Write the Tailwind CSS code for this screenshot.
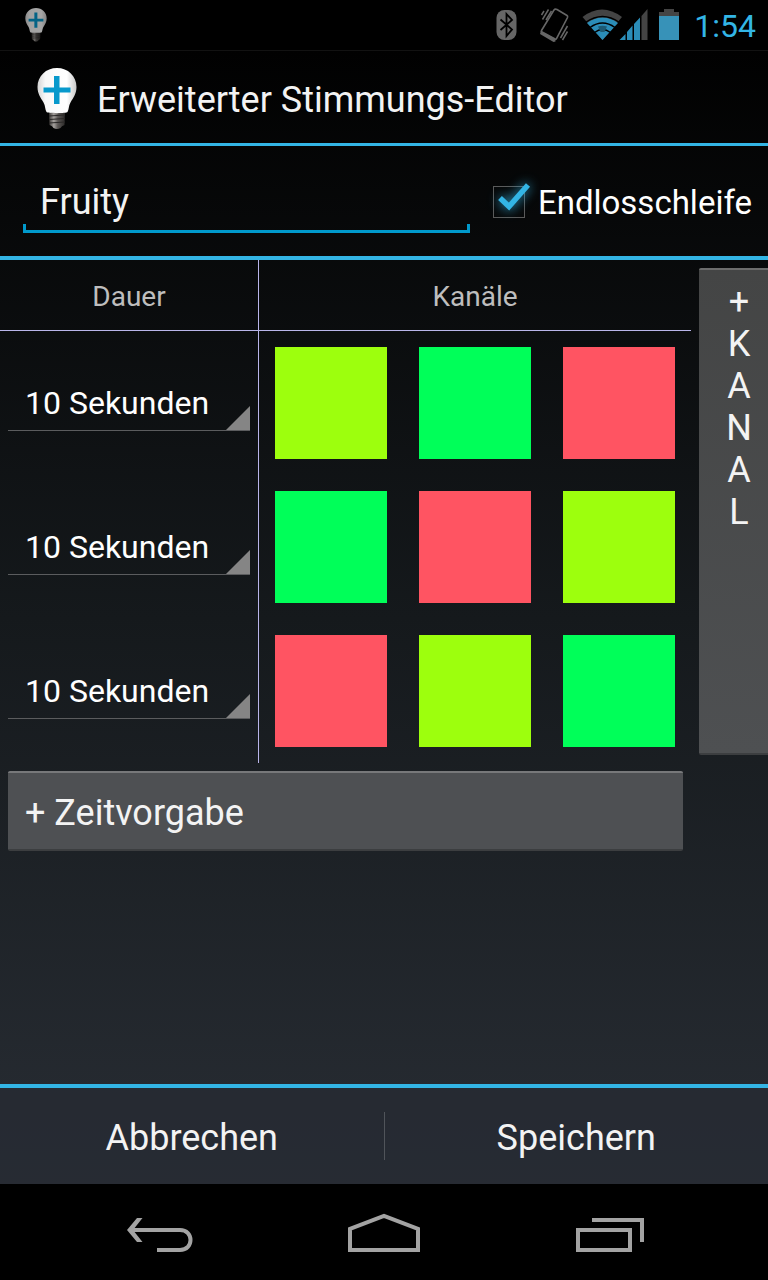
<!DOCTYPE html>
<html lang="de">
<head>
<meta charset="utf-8">
<meta name="viewport" content="width=device-width, initial-scale=1">
<title>Erweiterter Stimmungs-Editor</title>
<script src="https://cdn.jsdelivr.net/npm/@tailwindcss/browser@4"></script>
</head>
<body class="min-h-screen flex flex-col bg-black text-white font-['Roboto',sans-serif]">

<svg class="absolute size-0" aria-hidden="true">
  <defs>
    <linearGradient id="glass" x1="0" x2="1" y1="0" y2="0">
      <stop offset="0" stop-color="#d4d4d4"/><stop offset=".2" stop-color="#f8f8f8"/><stop offset=".75" stop-color="#ffffff"/><stop offset="1" stop-color="#c8c8c8"/>
    </linearGradient>
    <linearGradient id="socket" x1="0" x2="1" y1="0" y2="0">
      <stop offset="0" stop-color="#3a3735"/><stop offset=".3" stop-color="#a5a19e"/><stop offset=".55" stop-color="#5b5755"/><stop offset="1" stop-color="#2c2a29"/>
    </linearGradient>
    <symbol id="bulb" viewBox="0 0 40 62">
      <path fill="url(#socket)" d="M12 44h16l-.5 13q-3 1-4 3-3.500 2-7 0-1-2-4-3z"/>
      <path stroke="#2a2827" stroke-width="1" fill="none" d="M12 48l16-1M12 51.500l16-1M12 55l16-1"/>
      <path fill="url(#glass)" d="M20 0C9 0 .5 8 .5 19c0 7 3.500 11 6 15.500 2 3.500 1.500 7 3 9.500 1 1.500 20 1.500 21 0 1.500-2.500 1-6 3-9.500 2.500-4.500 6-8.500 6-15.500C39.500 8 31 0 20 0z"/>
      <path fill="#0799cc" d="M17 8h5.500v11.500h11v5h-11v11.500H17v-11.500H6.500v-5H17z"/>
    </symbol>
  </defs>
</svg>

<div class="h-[51px] shrink-0 flex items-center border-b border-[#121212] pl-[25px] pr-3">
  <svg class="w-[22px] h-[34px] opacity-65" aria-hidden="true"><use href="#bulb"/></svg>
  <div class="ml-auto flex items-center">
    <svg class="w-[163px] h-[50px] overflow-visible" viewBox="0 0 163 50" role="img" aria-label="Bluetooth, Vibration, WLAN, Mobilfunk">
      <rect x=".5" y="10" width="20" height="30" rx="8" fill="#666"/>
      <path d="M4.500 19.500l11.500 10-5.500 6.500V14l5.500 6-11.500 10" fill="none" stroke="#000" stroke-width="1.800"/>
      <path d="M61 9.500l10 6q1 .7.500 2L60.500 38.500q-.8 1.300-2 .7L46 32.500q-1.200-.7-.5-2L58 10q1-1.500 3-.5z" fill="none" stroke="#666" stroke-width="1.600"/>
      <path d="M45 30.500l14 7.500 .5 3.500-2 .5L44 34z" fill="#666"/>
      <path d="M48 11l-2.500 4M52.500 9.500l-6 10M55.500 11l-5.500 9M71.500 26l-7 12M71.500 31.500l-5 8.500" stroke="#666" stroke-width="1.500" fill="none"/>
      <path fill="#444" d="M86.500 17Q106 2 126 17L106.500 40z"/>
      <path fill="#2b8db8" d="M91 23Q106.500 12 122 23L106.500 40z"/>
      <path fill="none" stroke="#000" stroke-width="1.500" d="M89.500 22.500Q106.500 10.500 123.500 22.500M94 27.500Q106.500 18.500 119 27.500M98.500 32.500Q106.500 26.500 114.500 32.500"/>
      <path fill="#1d5a73" d="M102 26.500q4.500-1.500 9 0l-2.500 5.500h-4z"/>
      <path fill="#2b8db8" d="M123.500 40l6-6v6zM131 40v-8l5.500-6.500V40zM138 40V24l6-6.500V40z"/>
      <path fill="#444" d="M145.500 40V16l6-7v31z"/>
    </svg>
    <svg class="w-[20px] h-[32px] mr-[15px]" viewBox="0 0 20 32" role="img" aria-label="Akku">
      <path fill="#444" d="M0 3h5V0h10v3h5v5H0z"/><path fill="#3792b8" d="M0 7h20v24H0z"/>
    </svg>
    <time class="pt-[2px] text-[32px] leading-[48px] text-[#33b5e5]">1:54</time>
  </div>
</div>

<div class="grow flex flex-col bg-linear-to-b/srgb from-[#010101] via-[#15191c] to-[#282d34]">
  <header class="h-[95px] shrink-0 flex items-center gap-5 pt-1 pl-[37px] border-b-3 border-[#33b5e5]">
    <svg class="w-[40px] h-[62px]" aria-hidden="true"><use href="#bulb"/></svg>
    <h1 class="pt-[2px] text-[36px] leading-[44px] text-[#f3f3f3]">Erweiterter Stimmungs-Editor</h1>
  </header>

  <main class="grow flex flex-col">
    <div class="h-[114px] shrink-0 flex items-center pl-[23px] pr-4 border-b-4 border-[#33b5e5]">
      <div class="relative flex-1 min-w-0 h-[64px]">
        <input type="text" value="Fruity" aria-label="Name der Stimmung" class="block w-full h-full pt-[2px] px-[17px] text-[36px] leading-[44px] text-[#f3f3f3] bg-transparent outline-none">
        <span class="absolute inset-x-0 bottom-0 h-[9px] border-3 border-t-0 border-[#0099cc] pointer-events-none"></span>
      </div>
      <label class="relative ml-[23px] pt-[2px] flex items-center gap-[13px] text-[33px] leading-[44px]">
        <input type="checkbox" checked class="appearance-none size-[32px] border border-[#5a5a5a] peer">
        <svg class="absolute -left-[5px] top-0 size-[48px] overflow-visible drop-shadow-[0_0_6px_#33b5e5] invisible peer-checked:visible" viewBox="0 0 48 48" aria-hidden="true">
          <path d="M12 21l9 8.500L40 8" fill="none" stroke="#33b5e5" stroke-width="5.500"/>
        </svg>
        <span class="pt-[2px]">Endlosschleife</span>
      </label>
    </div>

    <div class="flex">
      <div class="flex-1 min-w-0">
        <table class="w-full table-fixed border-separate border-spacing-0">
          <thead>
            <tr class="h-[71px] text-[28px] leading-[36px] text-[#bebebe]">
              <th scope="col" class="w-[259px] p-0 pt-[4px] font-normal border-r border-b border-[#b9b5ea]">Dauer</th>
              <th scope="colgroup" colspan="3" class="p-0 pt-[4px] font-normal border-b border-[#b9b5ea]">Kanäle</th>
            </tr>
          </thead>
          <tbody>
            <tr class="h-[144px]">
              <td class="p-0 pl-2 pr-2 border-r border-[#b9b5ea]">
                <div class="relative border-b border-[#5b5c5e]">
                  <select aria-label="Dauer Zeile 1" class="appearance-none block w-full h-[55px] pl-[17px] text-[32px] bg-transparent"><option>10 Sekunden</option></select>
                  <span class="absolute right-0 bottom-0 size-[24px] bg-[#858585] [clip-path:polygon(100%_0,100%_100%,0_100%)] pointer-events-none"></span>
                </div>
              </td>
              <td class="p-4"><button aria-label="Farbe Limette" class="block w-full h-[112px] bg-[#9dff0d]"></button></td>
              <td class="p-4"><button aria-label="Farbe Grün" class="block w-full h-[112px] bg-[#00ff59]"></button></td>
              <td class="p-4"><button aria-label="Farbe Rot" class="block w-full h-[112px] bg-[#ff5462]"></button></td>
            </tr>
            <tr class="h-[144px]">
              <td class="p-0 pl-2 pr-2 border-r border-[#b9b5ea]">
                <div class="relative border-b border-[#5b5c5e]">
                  <select aria-label="Dauer Zeile 2" class="appearance-none block w-full h-[55px] pl-[17px] text-[32px] bg-transparent"><option>10 Sekunden</option></select>
                  <span class="absolute right-0 bottom-0 size-[24px] bg-[#858585] [clip-path:polygon(100%_0,100%_100%,0_100%)] pointer-events-none"></span>
                </div>
              </td>
              <td class="p-4"><button aria-label="Farbe Grün" class="block w-full h-[112px] bg-[#00ff59]"></button></td>
              <td class="p-4"><button aria-label="Farbe Rot" class="block w-full h-[112px] bg-[#ff5462]"></button></td>
              <td class="p-4"><button aria-label="Farbe Limette" class="block w-full h-[112px] bg-[#9dff0d]"></button></td>
            </tr>
            <tr class="h-[144px]">
              <td class="p-0 pl-2 pr-2 border-r border-[#b9b5ea]">
                <div class="relative border-b border-[#5b5c5e]">
                  <select aria-label="Dauer Zeile 3" class="appearance-none block w-full h-[55px] pl-[17px] text-[32px] bg-transparent"><option>10 Sekunden</option></select>
                  <span class="absolute right-0 bottom-0 size-[24px] bg-[#858585] [clip-path:polygon(100%_0,100%_100%,0_100%)] pointer-events-none"></span>
                </div>
              </td>
              <td class="p-4"><button aria-label="Farbe Rot" class="block w-full h-[112px] bg-[#ff5462]"></button></td>
              <td class="p-4"><button aria-label="Farbe Limette" class="block w-full h-[112px] bg-[#9dff0d]"></button></td>
              <td class="p-4"><button aria-label="Farbe Grün" class="block w-full h-[112px] bg-[#00ff59]"></button></td>
            </tr>
          </tbody>
        </table>
        <div class="p-2">
          <button class="block w-full h-[80px] pt-[4px] px-[17px] text-left text-[36px] leading-[44px] text-[#f3f3f3] bg-[#4e5053] rounded-xs border-t-2 border-b-2 border-t-[#77787a] border-b-[#3c3e40]">+ Zeitvorgabe</button>
        </div>
      </div>
      <button aria-label="+ Kanal" class="w-[69px] h-[487px] mt-2 ml-2 pt-[11px] pl-[11px] flex flex-col items-center text-[36px] leading-[42px] text-[#f3f3f3] bg-linear-to-b from-[#444545] to-[#4e5052] rounded-l-xs border-t-2 border-b-2 border-t-[#6c6d6d] border-b-[#3c3e40]"><span>+</span><span>K</span><span>A</span><span>N</span><span>A</span><span>L</span></button>
    </div>
  </main>

  <footer class="h-[100px] shrink-0 flex items-center border-t-4 border-[#33b5e5] bg-[#272b33]/70 text-[36px] leading-[44px] text-[#f3f3f3]">
    <button class="flex-1 h-full pt-[4px]">Abbrechen</button>
    <span class="w-px h-12 bg-[#50545a]"></span>
    <button class="flex-1 h-full pt-[4px]">Speichern</button>
  </footer>
</div>

<nav class="h-[96px] shrink-0 flex justify-center items-center gap-28 bg-black">
  <button aria-label="Zurück" class="w-[112px] h-full flex items-center justify-center">
    <svg class="w-[72px] h-[40px]" viewBox="0 0 72 40" fill="none" stroke="#a3a3a3" stroke-width="4" aria-hidden="true"><path d="M9 18h47c14 0 14 20 0 20H33"/><path fill="#a3a3a3" stroke="none" d="M3 18L13 6h5.500L9 18l9.500 12H13z"/></svg>
  </button>
  <button aria-label="Startseite" class="w-[112px] h-full flex items-center justify-center">
    <svg class="w-[72px] h-[40px]" viewBox="0 0 72 40" fill="none" stroke="#a3a3a3" stroke-width="4" aria-hidden="true"><path d="M2 38V17L36 4l34 13v21z"/></svg>
  </button>
  <button aria-label="Letzte Apps" class="w-[112px] h-full flex items-center justify-center">
    <svg class="w-[72px] h-[40px]" viewBox="0 0 72 40" fill="none" stroke="#a3a3a3" stroke-width="4" aria-hidden="true"><path d="M6 18h52v20H6zM20 8h50v22"/></svg>
  </button>
</nav>
</body>
</html>
